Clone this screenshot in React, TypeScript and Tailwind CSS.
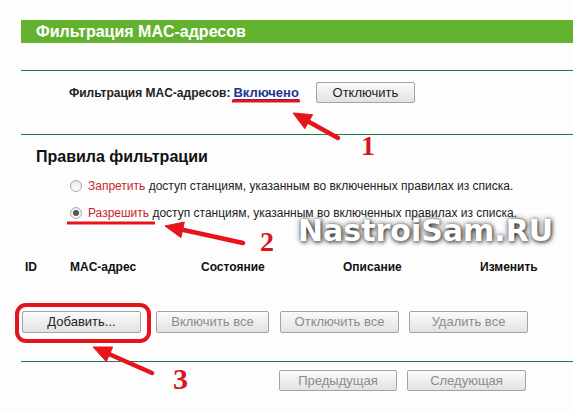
import React from "react";

function Btn({ children, w, dim, h = "h-[22px]" }: { children: React.ReactNode; w: string; dim?: boolean; h?: string }) {
  return (
    <div
      className={`${w} ${h} flex items-center justify-center rounded-[2px] border border-[#a3a3a3] bg-gradient-to-b from-[#fbfbfb] to-[#e2e2e2] text-[13px] ${dim ? "text-[#8c8c8c]" : "text-[#222]"}`}
    >
      {children}
    </div>
  );
}

function Radio({ checked }: { checked?: boolean }) {
  return (
    <div className="w-[12px] h-[12px] rounded-full border border-[#a8a8a8] bg-gradient-to-b from-[#e9e9e9] to-[#fdfdfd] flex items-center justify-center">
      {checked && <div className="w-[6px] h-[6px] rounded-full bg-[#555]" />}
    </div>
  );
}

export default function App() {
  return (
    <div className="relative w-[573px] h-[412px] overflow-hidden bg-[#fdfdfd] font-['Liberation_Sans',Arial,sans-serif] text-[#222]">
      <div className="pt-[20px] pl-[21px]">
        <div className="h-[23px] bg-[#63b22f] text-white font-bold text-[16px] leading-[23px] pl-[15px]">
          Фильтрация MAC-адресов
        </div>

        <div className="mt-[27px] border-t border-[#227a4a]">
          <div className="h-[63px] flex items-start pt-[11px] pl-[48px]">
            <div className="h-[21px] flex items-center text-[12px] font-bold">
              Фильтрация MAC-адресов:
            </div>
            <div className="h-[21px] flex items-center ml-[3px] text-[13px] font-bold text-[#1b3590] underline underline-offset-2">
              Включено
            </div>
            <div className="ml-[17px]">
              <Btn w="w-[99px]" h="h-[21px]">Отключить</Btn>
            </div>
          </div>
        </div>

        <div className="border-t border-[#227a4a]">
          <div className="mt-[12px] pl-[15px] text-[16px] leading-[20px] font-bold text-[#111]">
            Правила фильтрации
          </div>
          <div className="mt-[11px] pl-[49px] flex items-center gap-[6px] h-[16px] text-[12px]">
            <Radio />
            <span>
              <span className="text-[#c4262e]">Запретить</span> доступ станциям, указанным во включенных правилах из списка.
            </span>
          </div>
          <div className="mt-[11px] pl-[49px] flex items-center gap-[6px] h-[16px] text-[12px]">
            <Radio checked />
            <span>
              <span className="text-[#c4262e]">Разрешить</span> доступ станциям, указанным во включенных правилах из списка.
            </span>
          </div>

          <div className="mt-[38px] h-[16px] flex items-center text-[12px] font-bold text-[#111]">
            <span className="ml-[4px] w-[45px]">ID</span>
            <span className="w-[131px]">MAC-адрес</span>
            <span className="w-[142px]">Состояние</span>
            <span className="w-[137px]">Описание</span>
            <span>Изменить</span>
          </div>

          <div className="mt-[36px] flex items-center pl-[1px]">
            <Btn w="w-[119px]">Добавить...</Btn>
            <div className="ml-[15px]"><Btn w="w-[113px]" dim>Включить все</Btn></div>
            <div className="ml-[11px]"><Btn w="w-[119px]" dim>Отключить все</Btn></div>
            <div className="ml-[10px]"><Btn w="w-[119px]" dim>Удалить все</Btn></div>
          </div>

          <div className="mt-[28px] border-t border-[#227a4a]">
            <div className="mt-[8px] flex items-center pl-[258px]">
              <Btn w="w-[118px]" h="h-[21px]" dim>Предыдущая</Btn>
              <div className="ml-[10px]"><Btn w="w-[119px]" h="h-[21px]" dim>Следующая</Btn></div>
            </div>
          </div>
        </div>
      </div>

      {/* watermark */}
      <span className="absolute left-[298px] top-[216px] leading-none text-[30px] font-bold text-white font-['DejaVu_Sans',sans-serif] [text-shadow:1px_1px_4px_rgba(0,0,0,0.8),0_0_6px_rgba(0,0,0,0.45)]">
        NastroiSam.RU
      </span>

      {/* annotations */}
      <svg className="absolute inset-0 pointer-events-none" width="573" height="412" viewBox="0 0 573 412">
        <g stroke="#e8141b" fill="#e8141b">
          <line x1="232" y1="101" x2="300" y2="101" strokeWidth="3" />
          <line x1="67" y1="223" x2="155" y2="223" strokeWidth="3" />
          <rect x="17" y="305" width="132" height="36" rx="9" fill="none" strokeWidth="4" />
          <line x1="338" y1="138" x2="308.7" y2="121.7" strokeWidth="4.5" strokeLinecap="round" />
          <polygon points="293,113 312.6,114.7 304.8,128.7" strokeWidth="1" strokeLinejoin="round" />
          <line x1="243" y1="243" x2="182.6" y2="229.8" strokeWidth="4.5" strokeLinecap="round" />
          <polygon points="165,226 184.3,222 180.9,237.6" strokeWidth="1" strokeLinejoin="round" />
          <line x1="152" y1="373" x2="109.5" y2="354.3" strokeWidth="4.5" strokeLinecap="round" />
          <polygon points="93,347 112.7,347 106.3,361.6" strokeWidth="1" strokeLinejoin="round" />
        </g>
      </svg>
      <span className="absolute left-[361px] top-[132px] leading-none text-[28px] font-bold text-[#d8141c] font-['Liberation_Serif',serif]">1</span>
      <span className="absolute left-[260px] top-[228px] leading-none text-[28px] font-bold text-[#d8141c] font-['Liberation_Serif',serif]">2</span>
      <span className="absolute left-[173px] top-[364px] leading-none text-[30px] font-bold text-[#d8141c] font-['Liberation_Serif',serif]">3</span>
    </div>
  );
}
